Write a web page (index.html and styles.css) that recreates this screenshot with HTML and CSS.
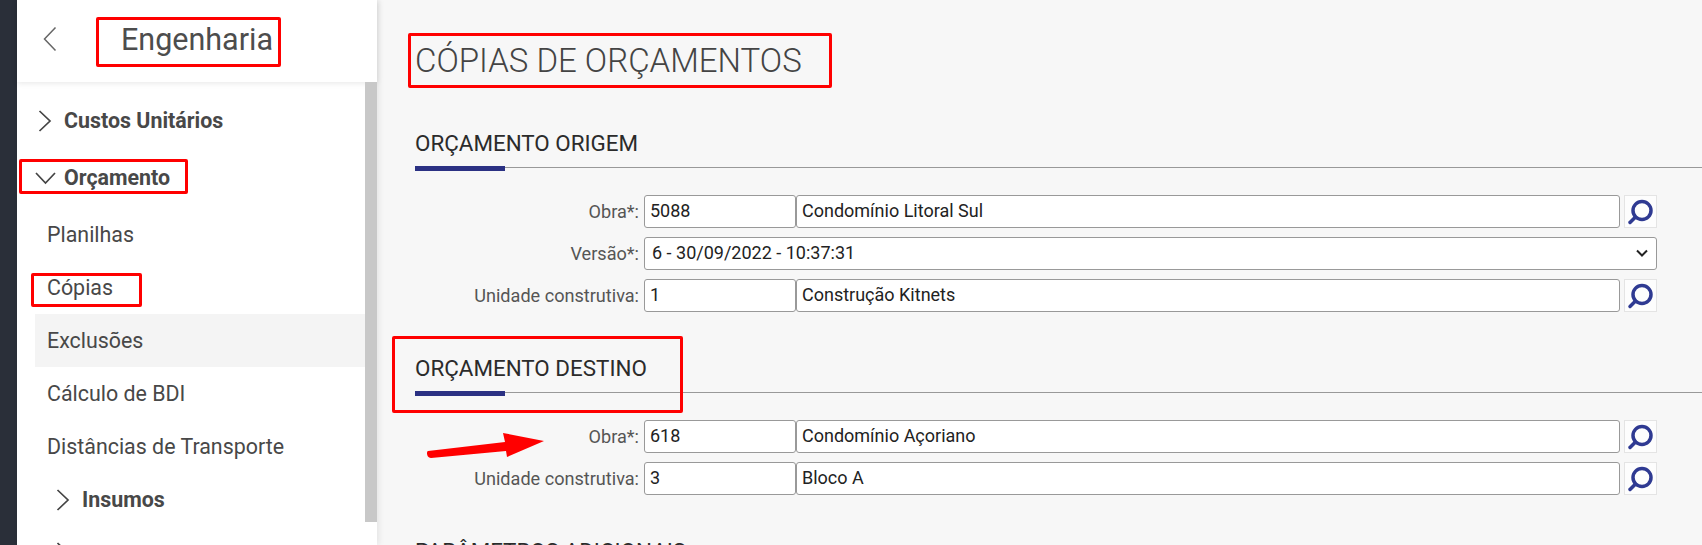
FILE: index.html
```
<!DOCTYPE html>
<html>
	<head>
		<meta charset="utf-8"/>
		<title>Cópias de Orçamentos</title>
		<link rel="stylesheet" href="styles.css">
	</head>
	<body>
		<div class="rail"></div>
		<aside class="sidebar">
			<header class="side-head">
				<svg class="back" width="16" height="26" viewBox="0 0 16 26"><path d="M13.500 1.500 2.500 13l11 11.500"/></svg>
				<span class="side-title">Engenharia</span>
			</header>
			<div class="side-body">
				<nav class="side-list">
					<a class="item group">
						<svg width="14" height="22" viewBox="0 0 14 22"><path d="M1.500 1 12 11 1.500 21"/></svg>
						Custos Unitários
					</a>
					<a class="item group open">
						<svg width="21" height="14" viewBox="0 0 21 14"><path d="M1 2l9.500 10L20 2"/></svg>
						Orçamento
					</a>
					<a class="item sub">Planilhas</a>
					<a class="item sub">Cópias</a>
					<a class="item sub hover">Exclusões</a>
					<a class="item sub">Cálculo de BDI</a>
					<a class="item sub">Distâncias de Transporte</a>
					<a class="item group nested">
						<svg width="14" height="22" viewBox="0 0 14 22"><path d="M1.500 1 12 11 1.500 21"/></svg>
						Insumos
					</a>
					<a class="item group nested">
						<svg width="14" height="22" viewBox="0 0 14 22"><path d="M1.500 1 12 11 1.500 21"/></svg>
					</a>
				</nav>
				<div class="scrollbar"></div>
			</div>
		</aside>
		<main class="content">
			<h1 class="page-title">CÓPIAS DE ORÇAMENTOS</h1>

			<section class="block">
				<h2 class="block-title">ORÇAMENTO ORIGEM</h2>
				<div class="form">
					<label class="field-label">Obra*:</label>
					<div class="field-row">
						<input class="code" value="5088">
						<input class="desc" value="Condomínio Litoral Sul">
						<button class="lookup"><svg width="31" height="31" viewBox="0 0 31 31"><circle cx="17" cy="14.500" r="9"/><path d="M10.500 21 5 26.500"/></svg></button>
					</div>
					<label class="field-label">Versão*:</label>
					<div class="field-row">
						<div class="select">
							<span>6 - 30/09/2022 - 10:37:31</span>
							<svg width="12" height="8" viewBox="0 0 12 8"><path d="M1 1.500l5 5 5-5"/></svg>
						</div>
					</div>
					<label class="field-label">Unidade construtiva:</label>
					<div class="field-row">
						<input class="code" value="1">
						<input class="desc" value="Construção Kitnets">
						<button class="lookup"><svg width="31" height="31" viewBox="0 0 31 31"><circle cx="17" cy="14.500" r="9"/><path d="M10.500 21 5 26.500"/></svg></button>
					</div>
				</div>
			</section>

			<section class="block">
				<h2 class="block-title">ORÇAMENTO DESTINO</h2>
				<div class="form">
					<label class="field-label">Obra*:</label>
					<div class="field-row">
						<input class="code" value="618">
						<input class="desc" value="Condomínio Açoriano">
						<button class="lookup"><svg width="31" height="31" viewBox="0 0 31 31"><circle cx="17" cy="14.500" r="9"/><path d="M10.500 21 5 26.500"/></svg></button>
					</div>
					<label class="field-label">Unidade construtiva:</label>
					<div class="field-row">
						<input class="code" value="3">
						<input class="desc" value="Bloco A">
						<button class="lookup"><svg width="31" height="31" viewBox="0 0 31 31"><circle cx="17" cy="14.500" r="9"/><path d="M10.500 21 5 26.500"/></svg></button>
					</div>
				</div>
			</section>

			<section class="block">
				<h2 class="block-title">PARÂMETROS ADICIONAIS</h2>
			</section>
		</main>

		<!-- marcações em vermelho por cima da tela -->
		<div class="mark mark-engenharia"></div>
		<div class="mark mark-orcamento"></div>
		<div class="mark mark-copias"></div>
		<div class="mark mark-title"></div>
		<div class="mark mark-destino"></div>
		<svg class="mark-arrow" width="130" height="32" viewBox="0 0 130 32">
			<path d="M4 22 81 13 79 4 120 12 83 28 82 22 7 29C3 29 2 23 4 22Z"/>
		</svg>
	</body>
</html>
```

FILE: styles.css
```
html, body {
	height: 100%;
}
body {
	margin: 0;
	display: flex;
	height: 545px;
	overflow: hidden;
	background-color: #f7f7f7;
	color: #444;
	font-family: Roboto, sans-serif;
}
.rail {
	width: 17px;
	flex: none;
	background-color: #2a2f39;
}
.sidebar {
	width: 360px;
	flex: none;
	display: flex;
	flex-direction: column;
	background-color: #fff;
	box-shadow: 2px 0 6px rgba(0, 0, 0, .08);
}
.side-head {
	box-sizing: border-box;
	height: 82px;
	flex: none;
	display: flex;
	align-items: center;
	padding: 0 0 4px 25px;
	box-shadow: 0 1px 6px rgba(0, 0, 0, .1);
}
.back {
	fill: none;
	stroke: #666;
	stroke-width: 1.500;
}
.side-title {
	margin-left: 63px;
	font-size: 30.500px;
	color: #4d4d4d;
}
.side-body {
	flex: 1;
	display: flex;
	min-height: 0;
}
.side-list {
	flex: 1;
	padding-top: 12px;
	overflow: hidden;
}
.scrollbar {
	width: 12px;
	height: 440px;
	background-color: #c8c8c8;
}
.item {
	display: flex;
	align-items: center;
	height: 53px;
	font-size: 21.400px;
	color: #484848;
}
.item svg {
	fill: none;
	stroke: #444;
	stroke-width: 1.700;
	flex: none;
}
.group {
	font-weight: 700;
	padding-left: 21px;
	gap: 12px;
}
.group.open {
	margin: 4px 0;
	padding-left: 18px;
	gap: 8px;
}
.group.nested {
	padding-left: 39px;
}
.sub {
	margin-left: 18px;
	padding-left: 12px;
}
.hover {
	background-color: #f4f4f4;
}
.content {
	flex: 1;
	min-width: 0;
	height: 545px;
	padding-left: 38px;
	overflow: hidden;
}
.page-title {
	margin: 41px 0 0;
	font-size: 33px;
	line-height: 40px;
	font-weight: 300;
	color: #444;
}
.block-title {
	position: relative;
	margin: 43px 0 0;
	padding-bottom: 11px;
	font-size: 22.400px;
	line-height: 26px;
	font-weight: 400;
	color: #2b2b2b;
	border-bottom: 1px solid #999;
}
.page-title + .block .block-title {
	margin-top: 49px;
}
.block-title::after {
	content: "";
	position: absolute;
	left: 0;
	bottom: -4px;
	width: 90px;
	height: 5px;
	background-color: #2b3183;
}
.form {
	display: grid;
	grid-template-columns: 229px 1013px;
	row-gap: 9px;
	margin-top: 27px;
	align-items: center;
}
.field-label {
	padding-right: 5px;
	text-align: right;
	font-size: 18.100px;
	color: #555;
}
.field-row {
	display: flex;
	height: 33px;
}
.field-row input, .select {
	box-sizing: border-box;
	height: 33px;
	padding: 0 5px 2px;
	border: 1px solid #999;
	border-radius: 3px;
	outline: none;
	background-color: #fff;
	font-family: Roboto, sans-serif;
	font-size: 18px;
	color: #222;
}
.code {
	width: 152px;
}
.desc {
	width: 824px;
}
.select {
	flex: 1;
	display: flex;
	align-items: center;
	justify-content: space-between;
	padding: 0 8px 2px 7px;
}
.select svg {
	fill: none;
	stroke: #222;
	stroke-width: 2;
}
.lookup {
	width: 33px;
	height: 33px;
	margin-left: 4px;
	padding: 0;
	display: flex;
	align-items: center;
	justify-content: center;
	background-color: #fdfdfd;
	border: 1px solid #e4e4e4;
}
.lookup svg {
	fill: none;
	stroke: #2f3a92;
	stroke-width: 3.500;
	stroke-linecap: round;
}
.mark {
	position: absolute;
	box-sizing: border-box;
	border: 3px solid #f00;
	border-radius: 2px;
}
.mark-engenharia {
	left: 96px;
	top: 17px;
	width: 185px;
	height: 50px;
}
.mark-orcamento {
	left: 19px;
	top: 159px;
	width: 169px;
	height: 35px;
}
.mark-copias {
	left: 31px;
	top: 273px;
	width: 111px;
	height: 34px;
}
.mark-title {
	left: 408px;
	top: 33px;
	width: 424px;
	height: 55px;
}
.mark-destino {
	left: 392px;
	top: 336px;
	width: 291px;
	height: 77px;
}
.mark-arrow {
	position: absolute;
	left: 424px;
	top: 429px;
	fill: #f00;
}
```
